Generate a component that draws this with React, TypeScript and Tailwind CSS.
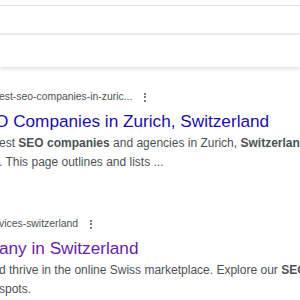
import { ReactNode } from "react";

function MoreDots() {
  return (
    <span className="ml-[11px] inline-flex h-[9px] w-[3px] flex-col items-center justify-between">
      <span className="h-[2px] w-[2px] rounded-full bg-[#4d5156]" />
      <span className="h-[2px] w-[2px] rounded-full bg-[#4d5156]" />
      <span className="h-[2px] w-[2px] rounded-full bg-[#4d5156]" />
    </span>
  );
}

type ResultProps = {
  url: string;
  title: string;
  titleOffset: string;
  titleColor: string;
  snippet: ReactNode;
};

function Result({ url, title, titleOffset, titleColor, snippet }: ResultProps) {
  return (
    <div className="flex flex-col">
      <div className="ml-[-1px] flex h-[16px] items-center whitespace-nowrap text-[10.4px] text-[#4d5156]">
        <span>{url}</span>
        <MoreDots />
      </div>
      <div className={`mt-[5px] whitespace-nowrap text-[17.2px] leading-[22px] ${titleColor} ${titleOffset}`}>{title}</div>
      <div className="ml-[-1px] mt-[2px] whitespace-nowrap text-[12px] leading-[19px] text-[#4d5156]">{snippet}</div>
    </div>
  );
}

export default function App() {
  return (
    <div className="h-[300px] w-[300px] overflow-hidden bg-white font-['Liberation_Sans',Arial,sans-serif]">
      <div className="h-[5px]" />
      <div className="h-[28px] border-t border-[#e0e0e0]" />
      <div className="h-[34px] border-t-2 border-[#ececec] shadow-[0_2px_4px_rgba(0,0,0,0.12)]" />

      <div className="mt-[22px] flex flex-col gap-[44px]">
        <Result
          url="est-seo-companies-in-zuric..."
          title="O Companies in Zurich, Switzerland"
          titleOffset="ml-[-5px]"
          titleColor="text-[#1a0dab]"
          snippet={
            <>
              est <b>SEO companies</b> and agencies in Zurich, <b>Switzerland</b>
              <br />. This page outlines and lists ...
            </>
          }
        />
        <Result
          url="vices-switzerland"
          title="any in Switzerland"
          titleOffset="ml-[-1px]"
          titleColor="text-[#681da8]"
          snippet={
            <>
              d thrive in the online Swiss marketplace. Explore our <b>SEO</b> services
              <br />
              spots.
            </>
          }
        />
      </div>
    </div>
  );
}
